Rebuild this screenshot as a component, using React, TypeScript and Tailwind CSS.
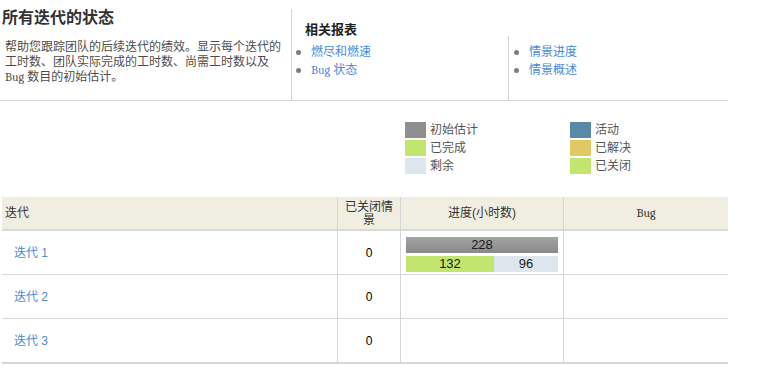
import React from "react";

const F = { fontFamily: '"Liberation Sans", "Noto Sans CJK SC", sans-serif' };

function Bullet() {
  return <span className="inline-block w-[5px] h-[5px] rounded-full bg-[#7d7d7d] shrink-0" />;
}

function LinkItem({ children }: { children: React.ReactNode }) {
  return (
    <div className="flex items-center h-[18px]">
      <Bullet />
      <a className="ml-[10px] text-[12px] leading-[18px] text-[#4a89dc] whitespace-nowrap">{children}</a>
    </div>
  );
}

function Mono({ children }: { children: React.ReactNode }) {
  return <span className="font-serif">{children}</span>;
}

function Legend({ color, label }: { color: string; label: string }) {
  return (
    <div className="flex items-center h-[16px]">
      <span className={`w-[21px] h-[16px] ${color}`} />
      <span className="ml-[4px] text-[12px] leading-[16px] text-[#555]">{label}</span>
    </div>
  );
}

const cols = "grid grid-cols-[336px_63px_163px_164px]";

export default function App() {
  return (
    <div className="w-[769px] h-[370px] bg-white overflow-hidden text-[#333]" style={F}>
      {/* top section */}
      <div className="flex w-[728px] h-[101px] border-b border-[#d4d4d4]">
        <div className="w-[291px] pl-[2px]">
          <div className="mt-[8px] text-[16px] leading-[20px] font-bold text-[#333]">所有迭代的状态</div>
          <div className="mt-[12px] ml-[3px] w-[278px] text-[12px] leading-[15px] text-[#4d4d4d]">
            帮助您跟踪团队的后续迭代的绩效。显示每个迭代的工时数、团队实际完成的工时数、尚需工时数以及 <Mono>Bug</Mono> 数目的初始估计。
          </div>
        </div>
        <div className="w-[217px] mt-[9px] border-l border-[#d4d4d4] pl-[4px]">
          <div className="mt-[13px] ml-[9px] text-[13px] leading-[16px] font-bold text-[#222]">相关报表</div>
          <div className="mt-[5px]">
            <LinkItem>燃尽和燃速</LinkItem>
            <LinkItem>
              <Mono>Bug</Mono> 状态
            </LinkItem>
          </div>
        </div>
        <div className="w-[220px] mt-[36px] border-l border-[#d4d4d4] pl-[5px] pt-[7px]">
          <LinkItem>情景进度</LinkItem>
          <LinkItem>情景概述</LinkItem>
        </div>
      </div>

      {/* legend */}
      <div className="ml-[405px] mt-[21px] flex">
        <div className="w-[165px] flex flex-col gap-[2px]">
          <Legend color="bg-[#8f8f8f]" label="初始估计" />
          <Legend color="bg-[#c2e56f]" label="已完成" />
          <Legend color="bg-[#dee6ed]" label="剩余" />
        </div>
        <div className="flex flex-col gap-[2px]">
          <Legend color="bg-[#5a89a5]" label="活动" />
          <Legend color="bg-[#dec962]" label="已解决" />
          <Legend color="bg-[#c2e56f]" label="已关闭" />
        </div>
      </div>

      {/* table */}
      <div className="ml-[2px] mt-[23px] w-[726px] border-b-2 border-[#d6d6d6]">
        <div className={`${cols} h-[34px] bg-[#f0eee1] border-b-2 border-[#d9d9d9] text-[12px] text-[#333]`}>
          <div className="border-r border-[#d6d6d6] flex items-center pl-[3px]">迭代</div>
          <div className="border-r border-[#d6d6d6] flex items-center justify-center text-center leading-[13px] px-[6px] pt-[2px]">
            已关闭情景
          </div>
          <div className="border-r border-[#d6d6d6] flex items-center justify-center">进度(小时数)</div>
          <div className="flex items-center justify-center text-[12px]">
            <Mono>Bug</Mono>
          </div>
        </div>

        {[1, 2, 3].map((n, i) => (
          <div key={n} className={`${cols} h-[43px] ${i < 2 ? "border-b border-[#d9d9d9] h-[44px]" : ""} text-[12px]`}>
            <div className="border-r border-[#d6d6d6] flex items-center pl-[12px]">
              <a className="text-[#4a89dc]">迭代 {n}</a>
            </div>
            <div className="border-r border-[#d6d6d6] flex items-center justify-center text-black">0</div>
            <div className="border-r border-[#d6d6d6]">
              {n === 1 && (
                <div className="pl-[5px] pt-[6px] w-[157px]">
                  <div className="h-[16px] w-[152px] bg-gradient-to-b from-[#a3a3a3] to-[#8a8a8a] flex items-center justify-center text-[13px] text-[#1a1a1a]">
                    228
                  </div>
                  <div className="mt-[3px] h-[16px] w-[152px] flex text-[13px] text-[#1a1a1a]">
                    <div className="w-[88px] bg-[#c2e56f] flex items-center justify-center">132</div>
                    <div className="flex-1 bg-[#dee6ed] flex items-center justify-center">96</div>
                  </div>
                </div>
              )}
            </div>
            <div />
          </div>
        ))}
      </div>
    </div>
  );
}
